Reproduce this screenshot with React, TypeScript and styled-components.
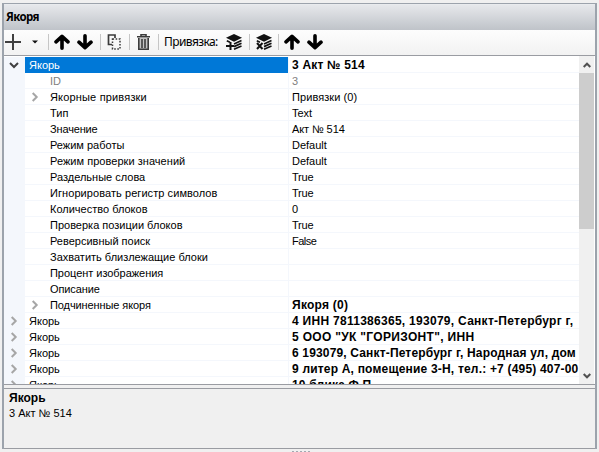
import React from "react";
import styled, { createGlobalStyle } from "styled-components";

const Global = createGlobalStyle`
  html, body { margin: 0; padding: 0; background: #f0f0f0; overflow: hidden; }
  * { box-sizing: border-box; }
`;

const Window = styled.div`
  width: 599px;
  height: 452px;
  padding: 3px 0 0 2px;
  background: #f0f0f0;
  overflow: hidden;
  font: 11px/16px "Liberation Sans", Arial, sans-serif;
  color: #000;
  display: flex;
  flex-direction: column;
`;

const Panel = styled.div`
  width: 595px;
  height: 446px;
  border: 1px solid #9ca3ac;
  border-left-width: 2px;
  border-right-width: 2px;
  display: flex;
  flex-direction: column;
`;

const Title = styled.div`
  flex: none;
  height: 26px;
  border-top: 1px solid #e9ebee;
  padding-left: 2px;
  background: linear-gradient(#e6e8eb, #bfc3c9);
  font: bold 11.5px/24px "Noto Sans", sans-serif;
  letter-spacing: -0.65px;
`;

const Toolbar = styled.div`
  flex: none;
  height: 25px;
  padding-bottom: 1px;
  background: linear-gradient(#fdfdfd, #f2f2f2);
  display: flex;
  align-items: center;
`;

const Icon = styled.svg<{ $left?: number }>`
  flex: none;
  margin-left: ${(p) => p.$left ?? 0}px;
`;

const Separator = styled.div<{ $left: number }>`
  flex: none;
  width: 1px;
  height: 16px;
  margin-left: ${(p) => p.$left}px;
  background: #c6c6c6;
`;

const ToolLabel = styled.span`
  width: 56px;
  margin-left: 5px;
  white-space: nowrap;
  font: 12px/20px "Noto Sans", sans-serif;
  letter-spacing: -0.6px;
`;

const Grid = styled.div`
  flex: none;
  height: 330px;
  border-top: 1px solid #9a9ca2;
  border-bottom: 1px solid #9a9ca2;
  background: #fff;
  display: flex;
  overflow: hidden;
`;

const Rows = styled.div`
  width: 575px;
  padding-top: 1px;
  overflow: hidden;
`;

const RowBox = styled.div`
  height: 16px;
  display: flex;
`;

const Gutter = styled.div`
  flex: none;
  width: 21px;
  background: #f4f7fc;
  display: flex;
  align-items: center;
  justify-content: flex-start;
  padding-left: 5px;
`;

const NameCell = styled.div<{ $selected?: boolean; $child?: boolean; $muted?: boolean; $ls: number }>`
  flex: none;
  width: 263px;
  height: 16px;
  display: flex;
  align-items: center;
  padding-left: ${(p) => (p.$child ? 5 : 4)}px;
  border-bottom: 1px solid ${(p) => (p.$selected ? "#0078d7" : "#f4f7fc")};
  background: ${(p) => (p.$selected ? "#0078d7" : "#fff")};
  color: ${(p) => (p.$selected ? "#fff" : p.$muted ? "#808080" : "#000")};
  letter-spacing: ${(p) => p.$ls}px;
  white-space: nowrap;
`;

const ChildMark = styled.span`
  width: 20px;
  display: flex;
`;

const ValueCell = styled.div<{ $bold?: boolean; $muted?: boolean; $ls: number }>`
  width: 291px;
  height: 16px;
  line-height: 17px;
  padding-left: 3px;
  border-left: 1px solid #f4f7fc;
  border-bottom: 1px solid #f4f7fc;
  font-weight: ${(p) => (p.$bold ? 700 : 400)};
  font-size: ${(p) => (p.$bold ? 12 : 11)}px;
  color: ${(p) => (p.$muted ? "#808080" : "#000")};
  letter-spacing: ${(p) => p.$ls}px;
  white-space: pre;
  overflow: hidden;
`;

const Scrollbar = styled.div`
  flex: none;
  width: 15px;
  background: #f0f0f0;
  display: flex;
  flex-direction: column;
  justify-content: space-between;
`;

const ScrollArrow = styled.div`
  height: 17px;
  display: flex;
  align-items: center;
  justify-content: center;
`;

const Thumb = styled.div`
  height: 156px;
  margin-bottom: auto;
  background: #cdcdcd;
`;

const Description = styled.div`
  flex: none;
  height: 61px;
  margin-top: 3px;
  border-top: 1px solid #9a9ca2;
  border-bottom: 1px solid #9a9ca2;
  padding: 2px 5px;
  line-height: 15px;
`;

const DescriptionTitle = styled.div`
  font-weight: 700;
  font-size: 12px;
`;

const Grip = styled.div`
  display: flex;
  gap: 2px;
  margin: 2px 0 0 290px;
`;

const GripDot = styled.i`
  width: 2px;
  height: 1px;
  background: #a3a9b2;
`;

type RowData = {
  name: string;
  value?: string;
  child?: boolean;
  mark?: "open" | "closed";
  selected?: boolean;
  muted?: boolean;
  bold?: boolean;
  ns?: number;
  vs?: number;
};

const rows: RowData[] = [
  { name: "Якорь", value: "3 Акт № 514", mark: "open", selected: true, bold: true, vs: 0.2 },
  { name: "ID", value: "3", child: true, muted: true },
  { name: "Якорные привязки", value: "Привязки (0)", child: true, mark: "closed", ns: 0.17, vs: 0.08 },
  { name: "Тип", value: "Text", child: true },
  { name: "Значение", value: "Акт № 514", child: true, ns: -0.15, vs: -0.1 },
  { name: "Режим работы", value: "Default", child: true },
  { name: "Режим проверки значений", value: "Default", child: true, ns: 0.04 },
  { name: "Раздельные слова", value: "True", child: true, vs: -0.2 },
  { name: "Игнорировать регистр символов", value: "True", child: true, ns: 0.07, vs: -0.2 },
  { name: "Количество блоков", value: "0", child: true },
  { name: "Проверка позиции блоков", value: "True", child: true, vs: -0.2 },
  { name: "Реверсивный поиск", value: "False", child: true, vs: -0.5 },
  { name: "Захватить близлежащие блоки", child: true },
  { name: "Процент изображения", child: true, ns: -0.04 },
  { name: "Описание", child: true, ns: -0.12 },
  { name: "Подчиненные якоря", value: "Якоря (0)", child: true, mark: "closed", bold: true, ns: -0.1, vs: 0.25 },
  { name: "Якорь", value: "4 ИНН 7811386365, 193079, Санкт-Петербург г,", mark: "closed", bold: true, vs: 0.28 },
  { name: "Якорь", value: "5 ООО \"УК \"ГОРИЗОНТ\", ИНН", mark: "closed", bold: true, vs: 0.32 },
  { name: "Якорь", value: "6 193079, Санкт-Петербург г, Народная ул, дом", mark: "closed", bold: true, vs: 0.16 },
  { name: "Якорь", value: "9 литер А, помещение 3-Н, тел.: +7 (495) 407-00", mark: "closed", bold: true, vs: 0.19 },
  { name: "Якорь", value: "10 блика Ф.П.", mark: "closed", bold: true, vs: 0.2 },
];

const Mark = ({ open }: { open?: boolean }) => (
  <Icon width="10" height="10" viewBox="0 0 10 10" fill="none" stroke={open ? "#404040" : "#a6a6a6"} strokeWidth="2">
    <path d={open ? "M1 3 5 7 9 3" : "M2.7 1 6.7 5 2.7 9"} />
  </Icon>
);

const Row = ({ row }: { row: RowData }) => (
  <RowBox>
    <Gutter>{!row.child && row.mark && <Mark open={row.mark === "open"} />}</Gutter>
    <NameCell $selected={row.selected} $child={row.child} $muted={row.muted} $ls={row.ns ?? 0}>
      {row.child && <ChildMark>{row.mark && <Mark />}</ChildMark>}
      {row.name}
    </NameCell>
    <ValueCell $bold={row.bold} $muted={row.muted} $ls={row.vs ?? 0}>{row.value}</ValueCell>
  </RowBox>
);

const Arrow = ({ down, left }: { down?: boolean; left: number }) => (
  <Icon $left={left} width="16" height="16" viewBox="0 0 16 16" fill="none" stroke="#000" strokeWidth="3.6" strokeLinecap="round" strokeLinejoin="round">
    <path d={down ? "M8 1.8V13M2 8.2 8 13.6 14 8.2" : "M8 14.2V3M2 7.8 8 2.4 14 7.8"} />
  </Icon>
);

const Layers = ({ remove, left }: { remove?: boolean; left: number }) => (
  <Icon $left={left} width="16" height="16" viewBox="0 0 16 16" fill="none" stroke="#111" strokeWidth="1.7">
    <path d="M8 0 16 3.8 8 7.8 0 3.8Z" fill="#111" stroke="none" />
    <path d="M.8 6.8 4 8.3M8 10 15.5 6.6M8 12.6 15.5 9.3M8 15.2 15.5 12" />
    <path strokeWidth="2" d={remove ? "M1 9 6.5 15M6.5 9 1 15" : "M4.5 8V16M0 12H8"} />
  </Icon>
);

export default function App() {
  return (
    <Window>
      <Global />
      <Panel>
        <Title>Якоря</Title>
        <Toolbar>
          <Icon $left={1} width="16" height="16" viewBox="0 0 16 16" stroke="#404040" strokeWidth="2">
            <path d="M8 0V16M0 8H16" />
          </Icon>
          <Icon $left={11} width="6" height="4" viewBox="0 0 6 4"><path d="M0 0.5H6L3 3.5Z" fill="#111" /></Icon>
          <Separator $left={10} />
          <Arrow left={5} />
          <Arrow down left={7} />
          <Separator $left={7} />
          <Icon $left={6} width="16" height="16" viewBox="0 0 16 16" fill="none" stroke="#3c3c3c">
            <path d="M5 10.5H1.5V1H8V4" strokeWidth="1.7" />
            <path d="M5.5 5H13V15H5.5Z" strokeWidth="1.5" strokeDasharray="1.6 1.5" />
          </Icon>
          <Separator $left={6} />
          <Icon $left={6} width="16" height="16" viewBox="0 0 16 16" fill="none" stroke="#3c3c3c" strokeWidth="1.6">
            <path d="M1 2.8H14M5 2.3V.8H10V2.3" />
            <path d="M2.8 4V15.2H12.2V4M6 5V14M9 5V14" fill="#c4c4c4" />
          </Icon>
          <Separator $left={6} />
          <ToolLabel>Привязка:</ToolLabel>
          <Layers left={6} />
          <Separator $left={7} />
          <Layers remove left={6} />
          <Separator $left={6} />
          <Arrow left={5} />
          <Arrow down left={7} />
        </Toolbar>
        <Grid>
          <Rows>{rows.map((row, i) => <Row key={i} row={row} />)}</Rows>
          <Scrollbar>
            <ScrollArrow>
              <Icon width="8" height="6" viewBox="0 0 8 6" fill="none" stroke="#505050" strokeWidth="2"><path d="M.7 5 4 1.7 7.3 5" /></Icon>
            </ScrollArrow>
            <Thumb />
            <ScrollArrow>
              <Icon width="8" height="6" viewBox="0 0 8 6" fill="none" stroke="#505050" strokeWidth="2"><path d="M.7 1 4 4.3 7.3 1" /></Icon>
            </ScrollArrow>
          </Scrollbar>
        </Grid>
        <Description>
          <DescriptionTitle>Якорь</DescriptionTitle>
          <div>3 Акт № 514</div>
        </Description>
      </Panel>
      <Grip>{[0, 1, 2, 3, 4].map((n) => <GripDot key={n} />)}</Grip>
    </Window>
  );
}
